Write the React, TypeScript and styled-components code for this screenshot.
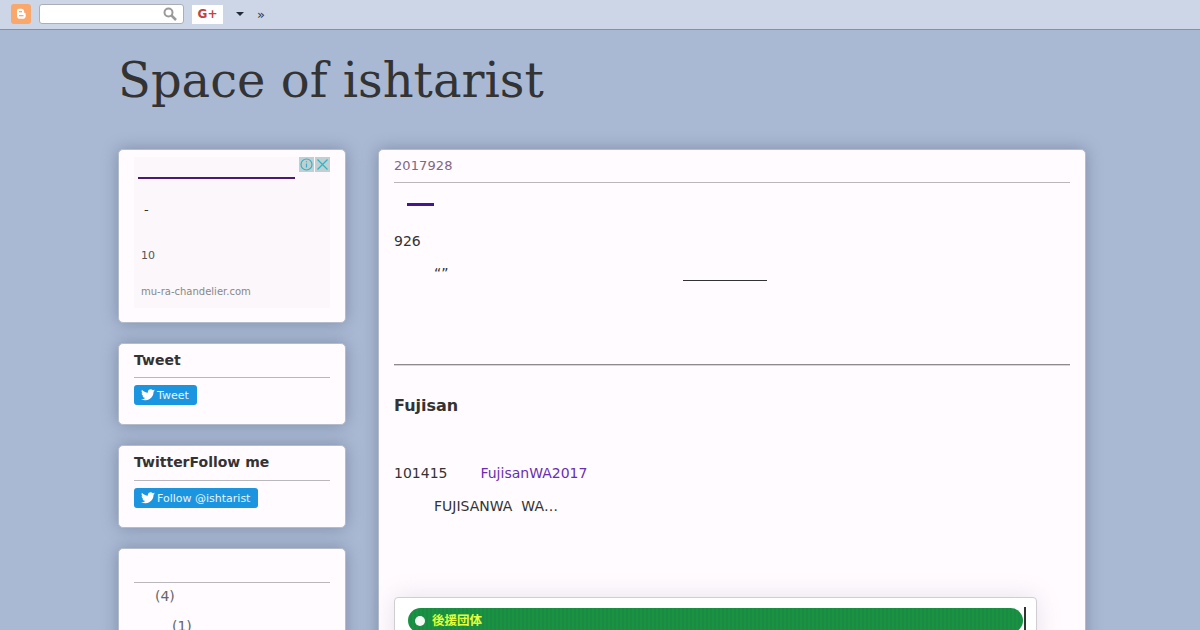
import React from 'react';
import styled, { createGlobalStyle } from 'styled-components';

const GlobalStyle = createGlobalStyle`
	html, body {
		margin: 0;
		padding: 0;
		height: 630px;
		overflow: hidden;
		background: #aab9d3;
		font-family: "DejaVu Sans", sans-serif;
	}
	* { box-sizing: border-box; }
`;

const TwitterBird = () => (
	<svg width="14" height="12" viewBox="0 0 24 20" fill="#fff">
		<path d="M24 2.4c-.9.4-1.8.7-2.8.8 1-.6 1.8-1.6 2.2-2.7-1 .6-2 1-3.1 1.2C19.300.7 18 0 16.600 0c-2.700 0-4.900 2.200-4.900 4.900 0 .4 0 .8.100 1.100C7.700 5.800 4.100 3.900 1.700.9c-.4.700-.7 1.600-.7 2.500 0 1.700.9 3.200 2.200 4.100-.8 0-1.600-.2-2.200-.6v.1c0 2.400 1.700 4.400 3.900 4.800-.4.100-.8.200-1.300.2-.3 0-.6 0-.9-.1.600 2 2.400 3.400 4.600 3.400-1.700 1.300-3.800 2.100-6.100 2.100-.4 0-.8 0-1.200-.1C2.200 18.200 4.800 19 7.500 19c9.100 0 14-7.500 14-14v-.6c1-.7 1.800-1.600 2.500-2z" />
	</svg>
);

const App = () => {
	return (
		<Page>
			<GlobalStyle />
			<Navbar>
				<BloggerLogo>
					<svg width="20" height="20" viewBox="0 0 20 20">
						<rect width="20" height="20" rx="3" fill="#f9a76a" />
						<path d="M6 6.500c0-1 .8-1.800 1.800-1.800h2.400c1.700 0 3 1.300 3 3v.6c0 .4.300.7.700.7.500 0 .8.300.8.800v2.400c0 1.500-1.200 2.600-2.600 2.600H8.600C7.200 14.800 6 13.700 6 12.200z" fill="#fff" />
						<rect x="8" y="7" width="3" height="1.300" fill="#f9a76a" />
						<rect x="8" y="11" width="4.500" height="1.300" fill="#f9a76a" />
					</svg>
				</BloggerLogo>
				<SearchBox>
					<svg width="14" height="14" viewBox="0 0 14 14" fill="none" stroke="#9a9a9a" strokeWidth="2">
						<circle cx="5.500" cy="5.500" r="4" />
						<path d="M8.500 8.500 L13 13" strokeWidth="2.500" />
					</svg>
				</SearchBox>
				<PlusButton>G+</PlusButton>
				<Caret />
				<More>»</More>
			</Navbar>
			<Header>Space of ishtarist</Header>
			<Columns>
				<Sidebar>
					<AdCard>
						<AdBox>
							<AdIcons>
								<AdIcon>
									<svg width="15" height="15" viewBox="0 0 15 15" fill="none" stroke="#2fb4c6" strokeWidth="1.200">
										<circle cx="7.500" cy="7.500" r="5.500" />
										<path d="M7.500 6.500v4M7.500 4.200v1" />
									</svg>
								</AdIcon>
								<AdIcon>
									<svg width="15" height="15" viewBox="0 0 15 15" fill="none" stroke="#2fb4c6" strokeWidth="1.200">
										<path d="M2.500 2.500l10 10M12.500 2.500l-10 10" />
									</svg>
								</AdIcon>
							</AdIcons>
							<AdLine />
							<AdDash>-</AdDash>
							<AdCount>10</AdCount>
							<AdDomain>mu-ra-chandelier.com</AdDomain>
						</AdBox>
					</AdCard>
					<WidgetCard $height={82}>
						<WidgetTitle $pad={7}>Tweet</WidgetTitle>
						<TweetButton><TwitterBird />Tweet</TweetButton>
					</WidgetCard>
					<WidgetCard $height={83}>
						<WidgetTitle $pad={8}>TwitterFollow me</WidgetTitle>
						<TweetButton><TwitterBird />Follow @ishtarist</TweetButton>
					</WidgetCard>
					<ArchiveCard>
						<ArchiveRule />
						<ArchiveItem $indent={21}>(4)</ArchiveItem>
						<ArchiveItem $indent={38}>(1)</ArchiveItem>
					</ArchiveCard>
				</Sidebar>
				<Main>
					<DateHeader>2017928</DateHeader>
					<PostTitleLine />
					<Paragraph>926</Paragraph>
					<QuoteRow>
						<span>“”</span>
						<QuoteLine />
					</QuoteRow>
					<Divider />
					<SectionTitle>Fujisan</SectionTitle>
					<LinkRow>
						<span>101415</span>
						<PurpleLink>FujisanWA2017</PurpleLink>
					</LinkRow>
					<IndentText>FUJISANWA&nbsp;&nbsp;WA…</IndentText>
					<Panel>
						<GreenBar>
							<Dot />
							<GreenLabel>後援団体</GreenLabel>
						</GreenBar>
						<PanelEdge />
					</Panel>
				</Main>
			</Columns>
		</Page>
	);
};

export default App;

const Page = styled.div`
	height: 630px;
	overflow: hidden;
`;

const Navbar = styled.div`
	height: 30px;
	background: #ccd6e6;
	border-bottom: 1px solid #8a8f99;
	display: flex;
	align-items: center;
	padding: 0 0 1px 11px;
`;

const BloggerLogo = styled.div`
	width: 20px;
	height: 20px;
	margin-right: 8px;
	display: flex;
`;

const SearchBox = styled.div`
	width: 145px;
	height: 20px;
	background: #fff;
	border: 1px solid #a9aeb8;
	border-radius: 3px;
	display: flex;
	align-items: center;
	justify-content: flex-end;
	padding-right: 6px;
`;

const PlusButton = styled.div`
	width: 31px;
	height: 19px;
	margin-left: 8px;
	background: #fff;
	color: #c0453a;
	font-size: 12px;
	font-weight: 700;
	line-height: 19px;
	text-align: center;
`;

const Caret = styled.div`
	width: 0;
	height: 0;
	margin-left: 13px;
	margin-bottom: 1px;
	border-left: 4px solid transparent;
	border-right: 4px solid transparent;
	border-top: 4px solid #222a3a;
`;

const More = styled.div`
	margin-left: 13px;
	font-size: 13px;
	color: #2d3547;
`;

const Header = styled.h1`
	margin: 0 0 0 118px;
	padding-top: 19px;
	height: 119px;
	font-family: "DejaVu Serif", serif;
	font-size: 48px;
	font-weight: 400;
	line-height: 62px;
	color: #333;
`;

const Columns = styled.div`
	display: flex;
	gap: 32px;
	margin-left: 118px;
	align-items: flex-start;
`;

const Sidebar = styled.div`
	width: 228px;
	display: flex;
	flex-direction: column;
	gap: 20px;
`;

const Card = styled.div`
	background: #fffbff;
	border: 1px solid #b4bccb;
	border-radius: 5px;
	box-shadow: 0 0 16px rgba(70, 85, 120, 0.45);
`;

const AdCard = styled(Card)`
	height: 174px;
	padding: 7px 15px 0;
`;

const AdBox = styled.div`
	position: relative;
	height: 151px;
	background: #fbf7fa;
	padding-top: 20px;
`;

const AdIcons = styled.div`
	position: absolute;
	top: 0;
	right: 0;
	display: flex;
	gap: 1px;
`;

const AdIcon = styled.div`
	width: 15px;
	height: 15px;
	background: #c0d0d2;
	display: flex;
`;

const AdLine = styled.div`
	width: 157px;
	height: 2px;
	margin-left: 4px;
	background: #4a1a70;
`;

const AdDash = styled.div`
	margin: 23px 0 0 10px;
	font-size: 13px;
	line-height: 16px;
	color: #333;
`;

const AdCount = styled.div`
	margin: 31px 0 0 7px;
	font-size: 11px;
	line-height: 14px;
	color: #555;
`;

const AdDomain = styled.div`
	margin: 22px 0 0 7px;
	font-size: 10px;
	line-height: 14px;
	color: #888;
`;

const WidgetCard = styled(Card)<{ $height: number }>`
	padding: 7px 15px 0;
	height: ${p => p.$height}px;
`;

const WidgetTitle = styled.h2<{ $pad: number }>`
	margin: 0;
	padding-bottom: ${p => p.$pad}px;
	border-bottom: 1px solid #b9b6bc;
	font-size: 14px;
	line-height: 19px;
	font-weight: 700;
	color: #333;
`;

const TweetButton = styled.div`
	display: inline-flex;
	align-items: center;
	gap: 2px;
	margin-top: 7px;
	height: 20px;
	padding: 0 8px 0 7px;
	background: #1b95e0;
	border-radius: 3px;
	color: #e8f4fc;
	font-size: 11px;
`;

const ArchiveCard = styled(Card)`
	height: 120px;
	padding: 33px 15px 0;
`;

const ArchiveRule = styled.div`
	height: 1px;
	margin-bottom: -4px;
	background: #b9b6bc;
`;

const ArchiveItem = styled.div<{ $indent: number }>`
	margin: 5px 0 0 ${p => p.$indent}px;
	font-size: 14px;
	line-height: 25px;
	color: #666;
`;

const Main = styled(Card)`
	width: 708px;
	height: 600px;
	padding: 0 15px;
	font-size: 14px;
	color: #333;
`;

const DateHeader = styled.div`
	height: 33px;
	padding-top: 7px;
	border-bottom: 1px solid #b9b6bc;
	font-size: 13px;
	line-height: 17px;
	letter-spacing: 0.1px;
	color: #80687f;
`;

const PostTitleLine = styled.div`
	width: 27px;
	height: 3px;
	margin: 20px 0 0 13px;
	background: #44158e;
`;

const Paragraph = styled.div`
	margin-top: 25px;
	line-height: 20px;
`;

const QuoteRow = styled.div`
	display: flex;
	align-items: flex-start;
	height: 113px;
	padding: 12px 0 0 40px;
	line-height: 20px;
`;

const QuoteLine = styled.div`
	width: 84px;
	height: 1px;
	margin: 17px 0 0 234px;
	background: #333;
`;

const Divider = styled.div`
	height: 1px;
	background: #8d8a90;
	box-shadow: 0 1px 0 #d8d5da;
`;

const SectionTitle = styled.h3`
	margin: 30px 0 0;
	font-size: 16px;
	line-height: 21px;
	font-weight: 700;
	color: #333;
`;

const LinkRow = styled.div`
	display: flex;
	gap: 33px;
	margin-top: 47px;
	line-height: 20px;
`;

const PurpleLink = styled.span`
	color: #6a2eb0;
`;

const IndentText = styled.div`
	margin: 13px 0 0 40px;
	line-height: 20px;
`;

const Panel = styled.div`
	position: relative;
	width: 643px;
	height: 60px;
	margin-top: 81px;
	padding: 10px 13px 0;
	background: #fff;
	border: 1px solid #d0ced3;
	border-radius: 4px;
	box-shadow: 0 0 24px rgba(120, 110, 130, 0.18);
`;

const GreenBar = styled.div`
	display: flex;
	align-items: center;
	width: 615px;
	height: 25px;
	padding-left: 7px;
	background: repeating-linear-gradient(90deg, #169440 0 2px, #1c8a44 2px 4px);
	border-radius: 13px;
`;

const Dot = styled.div`
	width: 10px;
	height: 10px;
	border-radius: 50%;
	background: #f4fbf4;
`;

const GreenLabel = styled.span`
	margin: 0 0 2px 7px;
	font-family: "Noto Sans CJK JP", sans-serif;
	font-size: 12.500px;
	font-weight: 700;
	color: #e6ff3a;
`;

const PanelEdge = styled.div`
	position: absolute;
	top: 9px;
	left: 629px;
	width: 2px;
	height: 50px;
	background: #333;
`;
